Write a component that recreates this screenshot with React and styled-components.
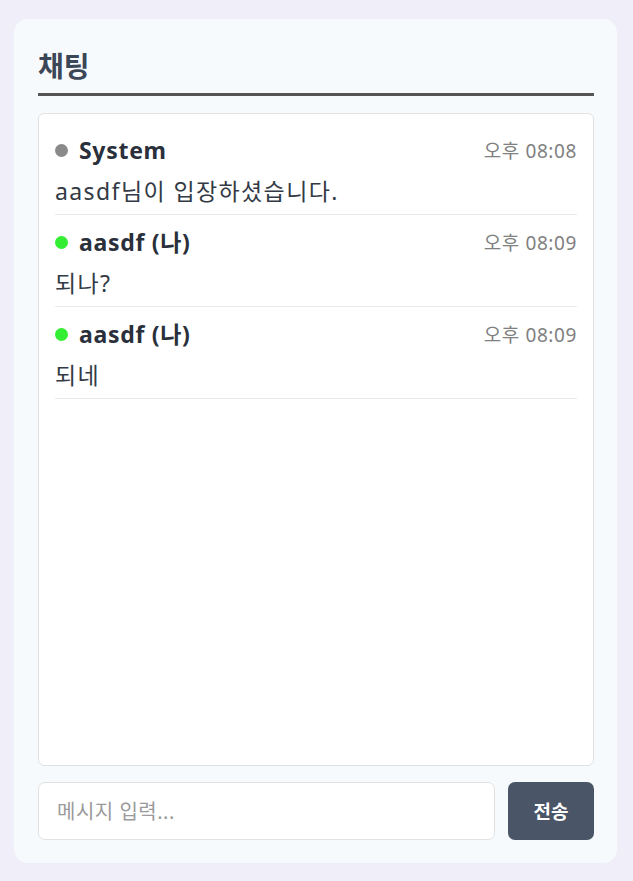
import React from "react";
import styled, { createGlobalStyle } from "styled-components";

const GlobalStyle = createGlobalStyle`
  html, body {
    margin: 0;
    padding: 0;
    background: #f0eef8;
    font-family: "Noto Sans", "Noto Sans CJK KR", sans-serif;
  }
  * { box-sizing: border-box; }
`;

const messages = [
  { id: 1, user: "System", me: false, system: true, time: "오후 08:08", text: "aasdf님이 입장하셨습니다." },
  { id: 2, user: "aasdf", me: true, time: "오후 08:09", text: "되나?" },
  { id: 3, user: "aasdf", me: true, time: "오후 08:09", text: "되네" },
];

const App = () => {
  return (
    <Page>
      <GlobalStyle />
      <Card>
        <Title>채팅</Title>
        <MessageList>
          {messages.map((m) => (
            <Message key={m.id}>
              <MessageHead>
                <Sender>
                  <Dot $system={m.system} />
                  {m.me ? `${m.user} (나)` : m.user}
                </Sender>
                <Time>{m.time}</Time>
              </MessageHead>
              <Body>{m.text}</Body>
            </Message>
          ))}
        </MessageList>
        <InputRow>
          <Input placeholder="메시지 입력..." autoFocus />
          <SendButton>전송</SendButton>
        </InputRow>
      </Card>
    </Page>
  );
};

const Page = styled.div`
  padding: 19px 16px 18px 14px;
  min-height: 100vh;
`;

const Card = styled.div`
  background: #f7fafd;
  border-radius: 14px;
  padding: 28px 23px 23px 24px;
  height: 844px;
  display: flex;
  flex-direction: column;
`;

const Title = styled.h2`
  margin: 0;
  font-family: "Noto Sans CJK KR", sans-serif;
  font-size: 28px;
  font-weight: 700;
  color: #3b4656;
  padding-bottom: 10px;
  border-bottom: 3px solid #555;
  line-height: 36px;
`;

const MessageList = styled.div`
  margin-top: 17px;
  flex: 1;
  background: #fff;
  border: 1px solid #e2e2e2;
  border-radius: 6px;
  padding: 9px 16px;
  overflow-y: auto;
`;

const Message = styled.div`
  border-bottom: 1px solid #eaeaea;
  padding: 11px 0 7px;
`;

const MessageHead = styled.div`
  display: flex;
  justify-content: space-between;
  align-items: center;
  height: 32px;
`;

const Sender = styled.div`
  display: flex;
  align-items: center;
  gap: 11px;
  font-size: 23px;
  font-weight: 700;
  letter-spacing: 0.7px;
  color: #2a303b;
  line-height: 32px;
`;

const Dot = styled.span`
  width: 13px;
  height: 13px;
  border-radius: 50%;
  background: ${(p) => (p.$system ? "#8a8a8a" : "#33ee33")};
`;

const Time = styled.span`
  font-size: 19px;
  letter-spacing: 0.6px;
  color: #808080;
`;

const Body = styled.div`
  margin-top: 9px;
  font-size: 23px;
  letter-spacing: 1.4px;
  color: #333a45;
  line-height: 32px;
`;

const InputRow = styled.div`
  display: flex;
  gap: 13px;
  margin-top: 16px;
`;

const Input = styled.input`
  flex: 1;
  height: 58px;
  border: 1px solid #e2e2e2;
  border-radius: 7px;
  padding: 0 18px;
  font-size: 20px;
  letter-spacing: 0.5px;
  font-family: inherit;
  color: #333;
  outline: none;
  &::placeholder {
    color: #9a9a9a;
  }
`;

const SendButton = styled.button`
  width: 86px;
  height: 58px;
  border: none;
  border-radius: 7px;
  background: #4a5568;
  color: #fff;
  font-size: 19px;
  font-weight: 700;
  font-family: inherit;
  cursor: pointer;
`;

export default App;
